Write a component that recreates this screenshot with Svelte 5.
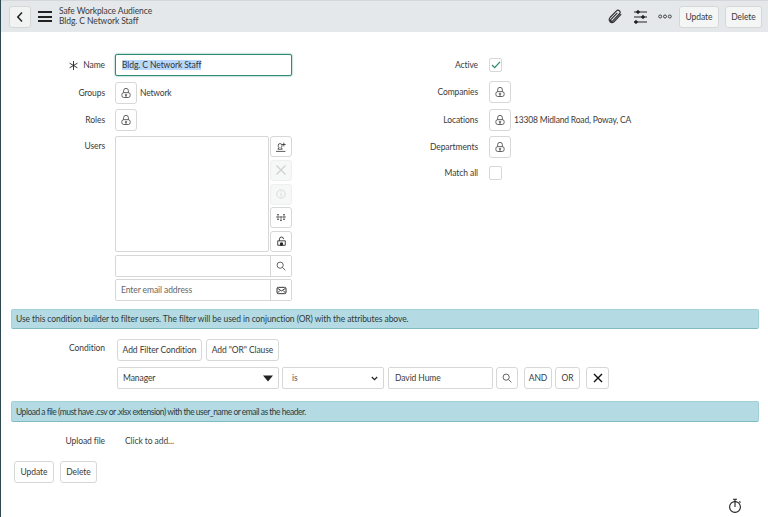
<script>
  import { onMount } from 'svelte';

  let nameInput;
  const leftRows = [
    { label: 'Groups', value: 'Network' },
    { label: 'Roles', value: '' }
  ];
  const rightRows = [
    { label: 'Companies', value: '' },
    { label: 'Locations', value: '13308 Midland Road, Poway, CA' },
    { label: 'Departments', value: '' }
  ];

  onMount(() => {
    nameInput.focus();
    nameInput.select();
  });
</script>

{#snippet lockIcon()}
  <svg width="12" height="12" viewBox="0 0 16 16" fill="none" stroke="#444" stroke-width="1.1">
    <path d="M4.800 7.500V5a3.200 3.200 0 0 1 6.400 0v2.500" />
    <rect x="2.500" y="7.500" width="11" height="6.500" rx="2.500" />
    <circle cx="8" cy="10.500" r="1" />
    <path d="M8 11.500V14" />
  </svg>
{/snippet}

<div class="page">
  <header class="topbar">
    <button class="btn back" aria-label="Back">
      <svg width="10" height="12" viewBox="0 0 10 12" fill="none" stroke="#222" stroke-width="1.500"><path d="M7 1.500 2.800 6 7 10.500" /></svg>
    </button>
    <div class="burger"><span></span><span></span><span></span></div>
    <div class="title">
      <div>Safe Workplace Audience</div>
      <div>Bldg. C Network Staff</div>
    </div>
    <div class="actions">
      <svg class="clip" width="15" height="15" viewBox="0 0 15 15" fill="none" stroke="#333" stroke-width="1.200"><path d="M2 8.500 8.500 1.800a2.100 2.100 0 0 1 3.200 2.700l-7 7.400a1.100 1.100 0 0 1-1.700-1.500L9.300 3.800M2 8.500a3.500 3.500 0 0 0 0 4.200 3 3 0 0 0 4 0l7.200-7.500" /></svg>
      <svg width="15" height="14" viewBox="0 0 15 14" stroke="#222" stroke-width="1" fill="#222"><path d="M1 2h13M1 7h13M1 12h13" /><circle cx="5" cy="2" r="1.300" /><circle cx="10" cy="7" r="1.300" /><circle cx="3" cy="12" r="1.300" /></svg>
      <svg class="dots" width="14" height="5" viewBox="0 0 14 5" fill="none" stroke="#333" stroke-width=".9"><circle cx="2.200" cy="2.500" r="1.500" /><circle cx="7" cy="2.500" r="1.500" /><circle cx="11.800" cy="2.500" r="1.500" /></svg>
      <button class="btn top update">Update</button>
      <button class="btn top">Delete</button>
    </div>
  </header>

  <main class="form">
    <section class="columns">
      <div class="col-left">
        <div class="row name-row">
          <label class="label" for="name">
            <svg class="req" width="9" height="9" viewBox="0 0 9 9" stroke="#222" stroke-width=".9"><path d="M4.500 0v9M.6 2.200l7.800 4.600M8.400 2.200.6 6.800" /></svg>
            Name
          </label>
          <input id="name" bind:this={nameInput} class="name-input" value="Bldg. C Network Staff" />
        </div>
        {#each leftRows as row}
          <div class="row">
            <span class="label">{row.label}</span>
            <button class="btn icon" aria-label="Unlock {row.label}">{@render lockIcon()}</button>
            {#if row.value}<span class="value">{row.value}</span>{/if}
          </div>
        {/each}
        <div class="row users-row">
          <span class="label users-label">Users</span>
          <div class="users">
            <div class="users-top">
              <div class="list"></div>
              <div class="side">
                <button class="btn icon" aria-label="Add me">
                  <svg width="10" height="10" viewBox="0 0 16 16" fill="none" stroke="#333" stroke-width="1.300"><path d="M6.500 2.500a3 3 0 0 1 3 3c0 1.500-.6 2.700-1.200 3.300l1.700 2.700H3l1.700-2.700C4.100 8.200 3.500 7 3.500 5.500a3 3 0 0 1 3-3zM0 15h15M12.500 1v6M9.500 4h6" /></svg>
                </button>
                <button class="btn icon off" aria-label="Remove">
                  <svg width="12" height="12" viewBox="0 0 12 12" stroke="#d0d2d2" stroke-width="1.300"><path d="M1.500 1.500l9 9M10.500 1.500l-9 9" /></svg>
                </button>
                <button class="btn icon off" aria-label="Info">
                  <svg width="10" height="10" viewBox="0 0 12 12" fill="none" stroke="#d2d5d5"><circle cx="6" cy="6" r="5" /><path d="M6 3v1M6 5.200V9" /></svg>
                </button>
                <button class="btn icon" aria-label="Add group">
                  <svg width="10" height="7" viewBox="0 0 10 7" fill="none" stroke="#555" stroke-width=".8"><path d="M0 3h10M2 .5v5M5 2v5M8 .5v5M1 .5h2M7 .5h2M1 5.500h2M4 6.500h2M7 5.500h2" /></svg>
                </button>
                <button class="btn icon" aria-label="Lock">
                  <svg width="11" height="11" viewBox="0 0 16 16" fill="none" stroke="#222" stroke-width="1.200"><path d="M5 7V4.500a3 3 0 0 1 6 0M2.500 7h11v6.500h-11z" /><path d="M6.500 10h3v3.500h-3z" fill="#222" /></svg>
                </button>
              </div>
            </div>
            <div class="combo">
              <input aria-label="Search users" />
              <button class="addon" aria-label="Search">
                <svg width="10" height="10" viewBox="0 0 12 12" fill="none" stroke="#444" stroke-width="1"><circle cx="5" cy="5" r="3.700" /><path d="m7.800 7.800 3.400 3.400" /></svg>
              </button>
            </div>
            <div class="combo">
              <input placeholder="Enter email address" />
              <button class="addon" aria-label="Email">
                <svg width="11" height="9" viewBox="0 0 12 10" fill="none" stroke="#333" stroke-width="1.100"><rect x="1" y="1.500" width="10" height="7" rx="1.500" /><path d="m1.500 2.500 4.500 3 4.500-3M1.500 7.500 4 5.500M10.500 7.500 8 5.500" /></svg>
              </button>
            </div>
          </div>
        </div>
      </div>

      <div class="col-right">
        <div class="row check-row">
          <span class="label">Active</span>
          <span class="check">
            <svg width="10" height="8" viewBox="0 0 11 9" fill="none" stroke="#2b8a74" stroke-width="1.400"><path d="m1 4.500 3 3 6-6.500" /></svg>
          </span>
        </div>
        {#each rightRows as row}
          <div class="row">
            <span class="label">{row.label}</span>
            <button class="btn icon" aria-label="Unlock {row.label}">{@render lockIcon()}</button>
            {#if row.value}<span class="value">{row.value}</span>{/if}
          </div>
        {/each}
        <div class="row check-row">
          <span class="label">Match all</span>
          <span class="check"></span>
        </div>
      </div>
    </section>

    <div class="banner first">Use this condition builder to filter users. The filter will be used in conjunction (OR) with the attributes above.</div>

    <section class="condition">
      <span class="label cond-label">Condition</span>
      <div class="cond-body">
        <div class="cond-buttons">
          <button class="btn text add-filter">Add Filter Condition</button>
          <button class="btn text add-or">Add "OR" Clause</button>
        </div>
        <div class="filter">
          <div class="field-select">
            <span>Manager</span>
            <svg width="10" height="7" viewBox="0 0 10 7" fill="#222"><path d="M0 .5h10L5 6.500z" /></svg>
          </div>
          <div class="op-select">
            <span>is</span>
            <svg width="7" height="5" viewBox="0 0 7 5" fill="none" stroke="#222" stroke-width="1.200"><path d="m.8 1 2.700 2.700L6.200 1" /></svg>
          </div>
          <input class="filter-value" value="David Hume" />
          <button class="btn icon search" aria-label="Search">
            <svg width="10" height="10" viewBox="0 0 12 12" fill="none" stroke="#444" stroke-width="1"><circle cx="5" cy="5" r="3.700" /><path d="m7.800 7.800 3.400 3.400" /></svg>
          </button>
          <button class="btn text and">AND</button>
          <button class="btn text or">OR</button>
          <button class="btn icon remove" aria-label="Remove condition">
            <svg width="10" height="10" viewBox="0 0 10 10" stroke="#111" stroke-width="1.400"><path d="m1 1 8 8M9 1l-8 8" /></svg>
          </button>
        </div>
      </div>
    </section>

    <div class="banner second">Upload a file (must have .csv or .xlsx extension) with the user_name or email as the header.</div>

    <div class="upload">
      <span class="label">Upload file</span>
      <span class="click-add">Click to add...</span>
    </div>

    <div class="bottom-buttons">
      <button class="btn text bottom-update">Update</button>
      <button class="btn text bottom-delete">Delete</button>
    </div>
  </main>

  <svg class="timer" width="14" height="16" viewBox="0 0 14 16" fill="none" stroke="#222" stroke-width="1.100"><circle cx="7" cy="9" r="5.400" /><path d="M7 1.500v7.500M5 1.200h4M11.300 3.500l1.200 1" /></svg>
</div>

<style>
  :global(body) {
    margin: 0;
    background: #fff;
  }

  .page {
    position: relative;
    width: 768px;
    height: 517px;
    overflow: hidden;
    box-sizing: border-box;
    border-left: 1px solid #2c4a50;
    font-family: Lato, sans-serif;
    font-size: 8.500px;
    letter-spacing: -.08px;
    color: #3a3a3a;
  }

  .topbar {
    display: flex;
    align-items: center;
    height: 32px;
    margin-left: -1px;
    padding: 0 6px 0 9px;
    box-sizing: border-box;
    background: #e4e8ea;
    border-top: 1px solid #d4d8da;
  }

  .btn {
    box-sizing: border-box;
    display: inline-flex;
    align-items: center;
    justify-content: center;
    padding: 0;
    background: #fff;
    border: 1px solid #d6d8d8;
    border-radius: 3px;
    color: #3a3a3a;
    font: inherit;
    letter-spacing: inherit;
  }

  .back {
    width: 22px;
    height: 22px;
    background: #f1f3f3;
  }

  .burger {
    display: flex;
    flex-direction: column;
    gap: 2.500px;
    margin-left: 7px;
  }

  .burger span {
    display: block;
    width: 14px;
    height: 2px;
    background: #222;
  }

  .title {
    margin: -2px 0 0 7px;
    line-height: 10px;
  }

  .actions {
    display: flex;
    align-items: center;
    margin-left: auto;
  }

  .clip { margin-right: 10px; }
  .dots { margin: 0 7px 0 10px; }

  .top {
    width: 37px;
    height: 22px;
    background: #f4f5f5;
  }

  .update {
    width: 40px;
    margin-right: 6px;
  }

  .form {
    padding: 22px 8px 0 10px;
  }

  .columns {
    display: flex;
  }

  .col-left { width: 344px; }

  .row {
    display: flex;
    align-items: center;
    height: 22px;
    margin-bottom: 5px;
  }

  .label {
    flex: none;
    width: 94px;
    margin-right: 10px;
    text-align: right;
    white-space: nowrap;
  }

  .req {
    vertical-align: -1.500px;
    margin-right: 3px;
  }

  .name-row { margin-bottom: 6px; }

  .name-input {
    box-sizing: border-box;
    width: 177px;
    height: 22px;
    padding: 0 6px;
    border: 1px solid #2f8a77;
    border-radius: 2px;
    box-shadow: 0 0 2px #4d9d8c;
    font: inherit;
    letter-spacing: inherit;
    color: #333;
    outline: none;
  }

  .name-input::selection {
    background: #b8d9fd;
    color: #333;
  }

  .icon {
    flex: none;
    width: 22px;
    height: 22px;
  }

  .value {
    margin-left: 3px;
    letter-spacing: -.18px;
  }

  .users-row {
    height: auto;
    align-items: flex-start;
    margin-bottom: 0;
  }

  .users-label { margin-top: 5px; }

  .users {
    width: 177px;
    display: flex;
    flex-direction: column;
    gap: 2px;
  }

  .users-top {
    display: flex;
    gap: 1px;
    margin-bottom: 1px;
  }

  .list {
    flex: 1;
    height: 116px;
    box-sizing: border-box;
    border: 1px solid #d6d8d8;
    border-radius: 2px;
  }

  .side {
    display: flex;
    flex-direction: column;
    justify-content: space-between;
    height: 116px;
  }

  .side .icon { height: 21px; }

  .off {
    background: #f6f7f7;
    border-color: #eeefef;
  }

  .combo {
    display: flex;
    box-sizing: border-box;
    height: 22px;
    border: 1px solid #d6d8d8;
    border-radius: 2px;
  }

  .combo input {
    flex: 1;
    min-width: 0;
    box-sizing: border-box;
    padding: 0 5px;
    border: 0;
    outline: none;
    font: inherit;
    letter-spacing: inherit;
    background: transparent;
  }

  .combo input::placeholder { color: #666; opacity: 1; }

  .addon {
    width: 21px;
    display: flex;
    align-items: center;
    justify-content: center;
    padding: 0;
    border: 0;
    border-left: 1px solid #d6d8d8;
    background: #fff;
  }

  .col-right .label {
    width: 123px;
    margin-right: 11px;
  }

  .col-right .row:nth-child(2) { margin-bottom: 6px; }
  .col-right .row:nth-child(4) { margin-bottom: 4px; }

  .check {
    box-sizing: border-box;
    width: 13px;
    height: 14px;
    display: flex;
    align-items: center;
    justify-content: center;
    border: 1px solid #d6d8d8;
    border-radius: 2px;
  }

  .banner {
    box-sizing: border-box;
    width: 748px;
    display: flex;
    align-items: center;
    padding-left: 4px;
    background: #b4dbe3;
    border: 1px solid #a3d0d6;
    border-bottom-color: #7fbcc2;
    border-radius: 2px;
    color: #2d3a3e;
  }

  .first {
    height: 20px;
    margin-top: 8px;
  }

  .condition {
    display: flex;
    margin-top: 10px;
  }

  .cond-label { margin-top: 4px; }

  .cond-body { margin-left: 2px; }

  .cond-buttons {
    display: flex;
    gap: 4px;
    margin-bottom: 6px;
  }

  .text { height: 22px; }

  .add-filter { width: 85px; }
  .add-or { width: 73px; }

  .filter {
    display: flex;
    align-items: center;
  }

  .field-select, .op-select {
    box-sizing: border-box;
    height: 22px;
    display: flex;
    align-items: center;
    justify-content: space-between;
    border: 1px solid #d6d8d8;
    border-radius: 2px;
  }

  .field-select {
    width: 162px;
    padding: 0 5px;
  }

  .op-select {
    width: 102px;
    margin-left: 3px;
    padding: 0 5px 0 9px;
    color: #555;
  }

  .filter-value {
    box-sizing: border-box;
    width: 105px;
    height: 22px;
    margin-left: 4px;
    padding: 0 6px;
    border: 1px solid #d6d8d8;
    border-radius: 2px;
    font: inherit;
    letter-spacing: inherit;
    color: #3a3a3a;
    outline: none;
  }

  .search { margin-left: 3px; }

  .and {
    width: 28px;
    margin-left: 6px;
  }

  .or {
    width: 25px;
    margin-left: 3px;
  }

  .remove {
    width: 23px;
    margin-left: 6px;
  }

  .second {
    height: 21px;
    margin-top: 12px;
    letter-spacing: -.5px;
  }

  .upload {
    display: flex;
    align-items: center;
    height: 10px;
    margin-top: 14px;
  }

  .click-add {
    margin-left: 10px;
    color: #444;
  }

  .bottom-buttons {
    display: flex;
    gap: 6px;
    margin-top: 15px;
    margin-left: 3px;
  }

  .bottom-update { width: 40px; }
  .bottom-delete { width: 37px; }

  .timer {
    position: absolute;
    right: 26px;
    bottom: 3px;
  }
</style>
